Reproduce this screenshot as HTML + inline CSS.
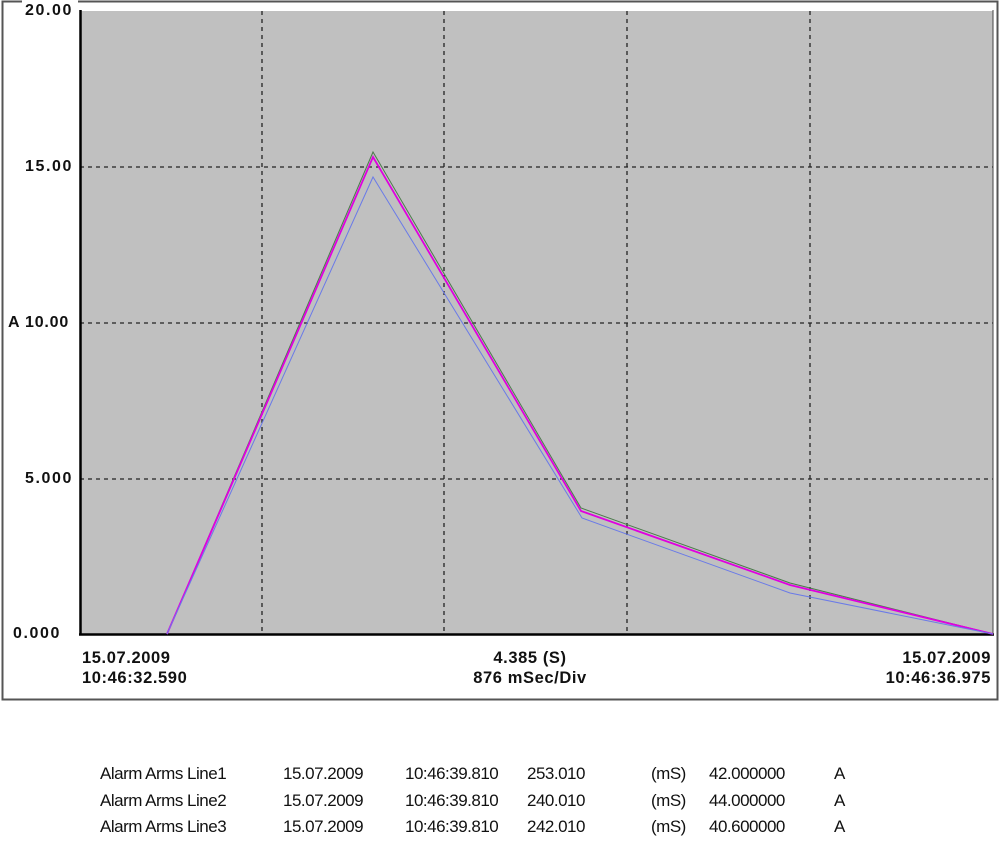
<!DOCTYPE html>
<html><head><meta charset="utf-8"><style>
body{margin:0;background:#fff;width:1000px;height:857px;overflow:hidden;position:relative;font-family:"Liberation Sans",Arial,sans-serif}
.t{position:absolute;font-size:14px;color:#111;font-family:"Liberation Sans",sans-serif;white-space:nowrap}
.y{font-weight:bold;font-size:16px;letter-spacing:1.6px}
.x{font-weight:bold;font-size:16.5px;line-height:20px;letter-spacing:0.6px}
.r span{position:absolute;white-space:nowrap}
</style></head><body>
<svg width="1000" height="857" style="position:absolute;left:0;top:0">
<rect x="2.5" y="1.5" width="995" height="698" fill="#fff" stroke="#555" stroke-width="2"/>
<rect x="80" y="11" width="913" height="623" fill="#c0c0c0"/>
<g stroke="#222" stroke-width="1.3" stroke-dasharray="4,4">
<line x1="262" y1="11" x2="262" y2="634"/><line x1="444" y1="11" x2="444" y2="634"/>
<line x1="627" y1="11" x2="627" y2="634"/><line x1="810" y1="11" x2="810" y2="634"/>
<line x1="80" y1="167" x2="993" y2="167"/><line x1="80" y1="323" x2="993" y2="323"/><line x1="80" y1="479" x2="993" y2="479"/>
</g>
<line x1="80.5" y1="10" x2="80.5" y2="635" stroke="#000" stroke-width="2.5"/>
<line x1="79" y1="634.5" x2="994" y2="634.5" stroke="#000" stroke-width="2.5"/>
<line x1="993" y1="10" x2="993" y2="635" stroke="#444" stroke-width="1"/>
<polyline points="167,634 373,152 581,508 790,583 993,634" fill="none" stroke="#4a7a4a" stroke-width="1"/>
<polyline points="167,634 373,157 581,511 790,585 993,634" fill="none" stroke="#e000e0" stroke-width="1.8"/>
<polyline points="167,634 373,177 582,518 790,593 993,634" fill="none" stroke="#6a7ae8" stroke-width="1"/>
<rect x="22" y="0" width="56" height="4" fill="#fff"/>
</svg>
<div class="t y" style="left:25px;top:2px">20.00</div>
<div class="t y" style="left:25px;top:158px">15.00</div>
<div class="t y" style="left:8px;top:314px;letter-spacing:0.8px">A 10.00</div>
<div class="t y" style="left:25px;top:470px">5.000</div>
<div class="t y" style="left:13px;top:625px">0.000</div>
<div class="t x" style="left:82px;top:648px">15.07.2009<br>10:46:32.590</div>
<div class="t x" style="left:430px;top:648px;width:200px;text-align:center">4.385 (S)<br>876 mSec/Div</div>
<div class="t x" style="left:791px;top:648px;width:200px;text-align:right">15.07.2009<br>10:46:36.975</div>
<div style="position:absolute;left:100px;top:761px;font-size:17px;line-height:26.5px;color:#111;font-family:'Liberation Sans',sans-serif;width:900px;letter-spacing:-0.5px">
<div class="r" style="position:relative;height:26.5px"><span style="left:0">Alarm Arms Line1</span><span style="left:183px">15.07.2009</span><span style="left:305px">10:46:39.810</span><span style="left:427px">253.010</span><span style="left:551px">(mS)</span><span style="left:609px">42.000000</span><span style="left:734px">A</span></div>
<div class="r" style="position:relative;height:26.5px"><span style="left:0">Alarm Arms Line2</span><span style="left:183px">15.07.2009</span><span style="left:305px">10:46:39.810</span><span style="left:427px">240.010</span><span style="left:551px">(mS)</span><span style="left:609px">44.000000</span><span style="left:734px">A</span></div>
<div class="r" style="position:relative;height:26.5px"><span style="left:0">Alarm Arms Line3</span><span style="left:183px">15.07.2009</span><span style="left:305px">10:46:39.810</span><span style="left:427px">242.010</span><span style="left:551px">(mS)</span><span style="left:609px">40.600000</span><span style="left:734px">A</span></div>
</div>
</body></html>
